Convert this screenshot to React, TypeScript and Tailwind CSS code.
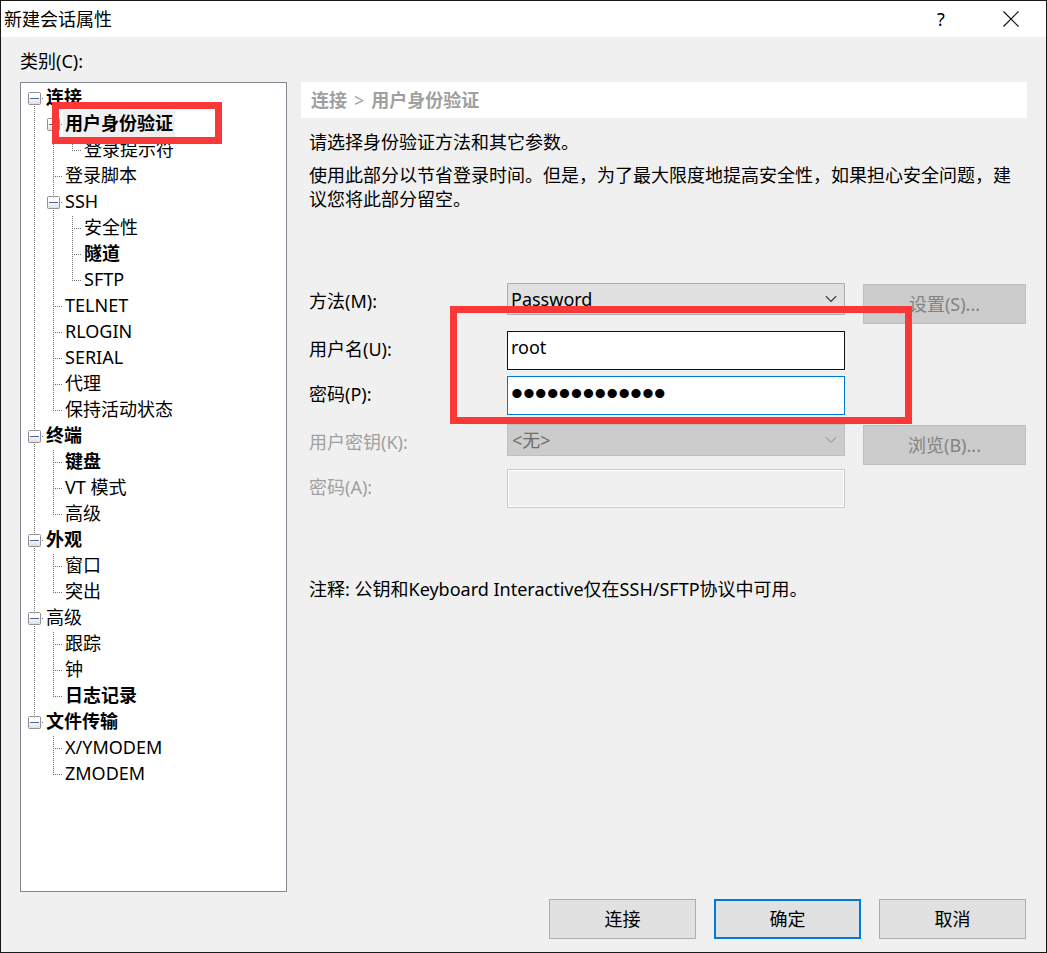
import type { ReactNode } from "react";

type TreeItem = { label: string; bold?: boolean; selected?: boolean; children?: TreeItem[] };

const categories: TreeItem[] = [
  {
    label: "连接",
    bold: true,
    children: [
      { label: "用户身份验证", bold: true, selected: true, children: [{ label: "登录提示符" }] },
      { label: "登录脚本" },
      { label: "SSH", children: [{ label: "安全性" }, { label: "隧道", bold: true }, { label: "SFTP" }] },
      { label: "TELNET" },
      { label: "RLOGIN" },
      { label: "SERIAL" },
      { label: "代理" },
      { label: "保持活动状态" },
    ],
  },
  { label: "终端", bold: true, children: [{ label: "键盘", bold: true }, { label: "VT 模式" }, { label: "高级" }] },
  { label: "外观", bold: true, children: [{ label: "窗口" }, { label: "突出" }] },
  { label: "高级", children: [{ label: "跟踪" }, { label: "钟" }, { label: "日志记录", bold: true }] },
  { label: "文件传输", bold: true, children: [{ label: "X/YMODEM" }, { label: "ZMODEM" }] },
];

const dots = { stroke: "#6f6f6f", strokeDasharray: "1 1", shapeRendering: "crispEdges" as const };

/* One 19px indent column: a plain vertical guide, or the elbow / toggle next to an item. */
function GuideCell({ up, down, branch, toggle }: { up: boolean; down: boolean; branch?: boolean; toggle?: boolean }) {
  return (
    <svg width="19" height="26" viewBox="0 0 19 26" className="shrink-0" aria-hidden="true">
      {up && <path d="M9.5 1V14" {...dots} />}
      {down && <path d="M9.5 13V26" {...dots} />}
      {branch && <path d="M9 13.5H18" {...dots} />}
      {toggle && (
        <>
          <rect x="3.5" y="7.5" width="12" height="12" rx="1" fill="url(#toggle-face)" stroke="#919191" />
          <path d="M5 13.5H14" stroke="#4b63a7" shapeRendering="crispEdges" />
        </>
      )}
    </svg>
  );
}

function TreeLevel({ items, trail }: { items: TreeItem[]; trail: boolean[] }) {
  return (
    <ul role={trail.length ? "group" : "tree"} aria-label={trail.length ? undefined : "类别"}>
      {items.map((item, i) => {
        const last = i === items.length - 1;
        const first = i === 0 && trail.length === 0;
        return (
          <li key={item.label} role="treeitem" aria-selected={!!item.selected} aria-expanded={item.children ? true : undefined}>
            <div className="flex h-[26px]">
              {trail.map((open, n) => (
                <GuideCell key={n} up={open} down={open} />
              ))}
              <GuideCell up={!first} down={!last} branch toggle={!!item.children} />
              <span
                className={`px-0.5 leading-6 whitespace-nowrap ${item.bold ? "font-bold" : ""} ${item.selected ? "bg-[#efefef]" : ""}`}
              >
                {item.label}
              </span>
            </div>
            {item.children && <TreeLevel items={item.children} trail={[...trail, !last]} />}
          </li>
        );
      })}
    </ul>
  );
}

function SelectBox({ id, value, disabled }: { id: string; value: string; disabled?: boolean }) {
  return (
    <div className="relative flex">
      <select
        id={id}
        disabled={disabled}
        defaultValue={value}
        className="h-8 w-full appearance-none border border-[#adadad] bg-[#e1e1e1] px-[3px] text-black opacity-100 outline-none disabled:border-[#bfbfbf] disabled:bg-[#cccccc] disabled:px-1 disabled:text-[#6d6d6d]"
      >
        <option>{value}</option>
      </select>
      <svg
        width="12"
        height="8"
        viewBox="0 0 12 8"
        aria-hidden="true"
        className={`pointer-events-none absolute top-3 right-2 ${disabled ? "text-[#a0a0a0]" : "text-[#333333]"}`}
      >
        <path d="M0.8 1.2L6 6.4L11.2 1.2" fill="none" stroke="currentColor" strokeWidth="1.2" />
      </svg>
    </div>
  );
}

function FormRow({
  id,
  label,
  disabled,
  tall,
  children,
  action,
}: {
  id: string;
  label: string;
  disabled?: boolean;
  tall?: boolean;
  children: ReactNode;
  action?: string;
}) {
  return (
    <div className={`grid grid-cols-[180px_1fr_163px] items-start gap-x-[18px] ${tall ? "h-12" : "h-[45px]"}`}>
      <label htmlFor={id} className={`leading-9 ${disabled ? "text-[#a0a0a0]" : ""}`}>
        {label}
      </label>
      {children}
      {action && (
        <button type="button" disabled className="mt-px h-10 border border-[#bfbfbf] bg-[#cccccc] text-[#838383]">
          {action}
        </button>
      )}
    </div>
  );
}

export default function App() {
  return (
    <div className="flex min-h-screen flex-col bg-[#171717] p-px font-['Noto_Sans','Noto_Sans_CJK_SC',sans-serif] text-[18px] leading-6 text-black">
      <svg width="0" height="0" className="absolute" aria-hidden="true">
        <defs>
          <linearGradient id="toggle-face" x1="0" y1="0" x2="0" y2="1">
            <stop offset="0.4" stopColor="#ffffff" />
            <stop offset="1" stopColor="#dcdcdc" />
          </linearGradient>
        </defs>
      </svg>

      <header className="flex h-9 items-center bg-white pl-[3px]">
        <h1 className="flex-1">新建会话属性</h1>
        <button type="button" aria-label="帮助" className="w-[70px]">
          ?
        </button>
        <button type="button" aria-label="关闭" className="flex h-9 w-[70px] items-center justify-center">
          <svg width="16" height="16" viewBox="0 0 16 16" aria-hidden="true">
            <path d="M0.5 0.5L15.5 15.5M15.5 0.5L0.5 15.5" stroke="#111111" strokeWidth="1.2" />
          </svg>
        </button>
      </header>

      <main className="flex flex-1 flex-col bg-[#f0f0f0] px-[19px] pt-3 pb-[13px]">
        <p className="mb-[9px]">类别(C):</p>

        <div className="flex flex-1 gap-[14px]">
          <nav className="relative w-[267px] shrink-0 border border-[#828790] bg-white pt-0.5 pl-1">
            <TreeLevel items={categories} trail={[]} />
            <div className="pointer-events-none absolute top-[19px] left-[31px] h-[42px] w-[170px] border-[7px] border-[#fb3838]" />
          </nav>

          <section className="min-w-0 flex-1">
            <h2 className="flex h-9 gap-[7px] bg-white pl-[10px] leading-9 font-bold text-[#a0a0a0]">
              <span>连接</span>
              <span className="font-normal">&gt;</span>
              <span>用户身份验证</span>
            </h2>

            <div className="pr-px pl-2">
              <p className="mt-3">请选择身份验证方法和其它参数。</p>
              <p className="mt-[9px]">
                使用此部分以节省登录时间。但是，为了最大限度地提高安全性，如果担心安全问题，建议您将此部分留空。
              </p>

              <form className="relative mt-[72px]" onSubmit={(e) => e.preventDefault()}>
                <FormRow id="method" label="方法(M):" tall action="设置(S)...">
                  <SelectBox id="method" value="Password" />
                </FormRow>
                <FormRow id="user" label="用户名(U):">
                  <input
                    id="user"
                    type="text"
                    defaultValue="root"
                    className="h-[39px] w-full border border-[#111111] bg-white px-[3px] pb-2 outline-none"
                  />
                </FormRow>
                <FormRow id="password" label="密码(P):" tall>
                  <input
                    id="password"
                    type="password"
                    defaultValue="1234567890abc"
                    className="h-[39px] w-full border border-[#0078d7] bg-white px-[3px] pb-1 font-['Liberation_Sans',sans-serif] text-[34px] outline-none"
                  />
                </FormRow>
                <FormRow id="key" label="用户密钥(K):" disabled action="浏览(B)...">
                  <SelectBox id="key" value="<无>" disabled />
                </FormRow>
                <FormRow id="passphrase" label="密码(A):" disabled>
                  <input
                    id="passphrase"
                    type="password"
                    disabled
                    className="h-[39px] w-full border border-[#cccccc] bg-[#f0f0f0] px-[3px] ring-1 ring-white ring-inset"
                  />
                </FormRow>
                <div className="pointer-events-none absolute top-[23px] right-[114px] left-[141px] h-[118px] border-[7px] border-[#fb3838]" />
              </form>

              <p className="mt-[63px]">注释: 公钥和Keyboard Interactive仅在SSH/SFTP协议中可用。</p>
            </div>
          </section>
        </div>

        <footer className="mt-[7px] flex justify-end gap-[18px] pr-px">
          <button type="button" className="h-10 w-[147px] border border-[#adadad] bg-[#e1e1e1]">
            连接
          </button>
          <button type="button" className="h-10 w-[147px] border-2 border-[#0078d7] bg-[#e1e1e1]">
            确定
          </button>
          <button type="button" className="h-10 w-[147px] border border-[#adadad] bg-[#e1e1e1]">
            取消
          </button>
        </footer>
      </main>
    </div>
  );
}
